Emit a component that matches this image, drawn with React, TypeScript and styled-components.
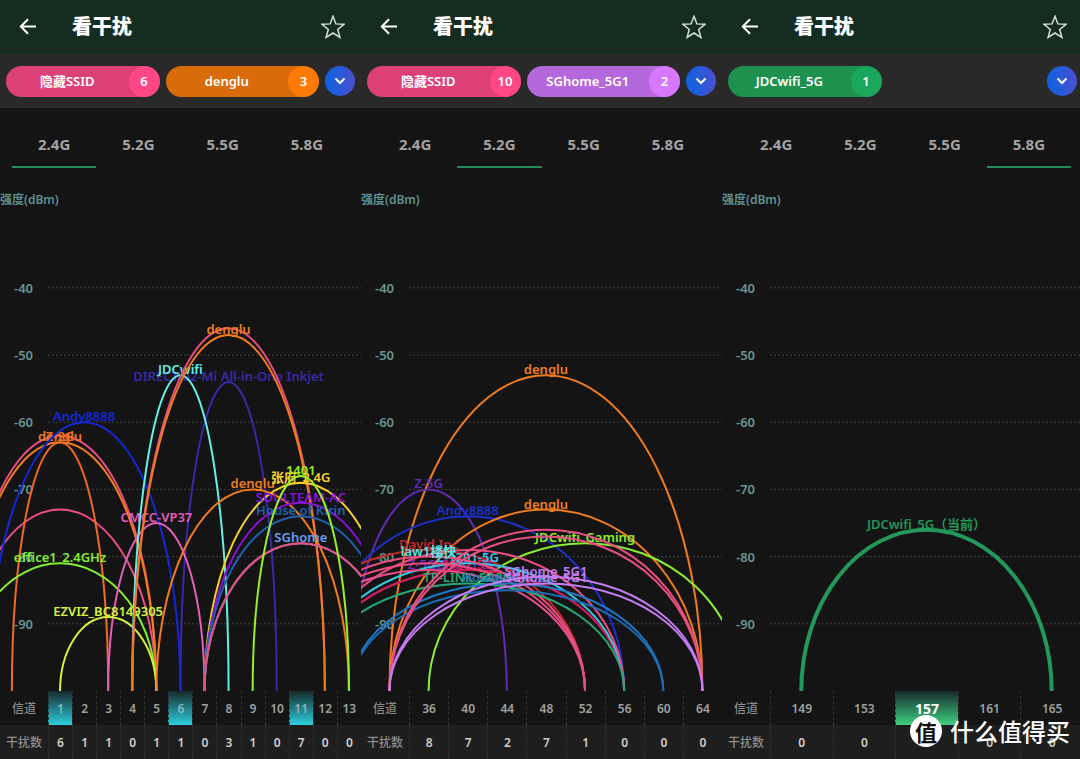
import React from 'react';
import styled, { createGlobalStyle } from 'styled-components';

const GlobalStyle = createGlobalStyle`
  * { box-sizing: border-box; }
  body {
    margin: 0;
    background: #141414;
    color: #fff;
    font-family: "Noto Sans", "Noto Sans CJK SC", sans-serif;
  }
  button { font: inherit; color: inherit; border: 0; margin: 0; padding: 0; background: none; cursor: pointer; }
`;

type Curve = { at: number; half: number; dbm: number; color: string; name?: string; width?: number };
type Chip = { name: string; count: number; base: string; cap: string };
type Screen = {
  id: string;
  chips: Chip[];
  band: string;
  first: number;
  step: number;
  channels: number[];
  counts: number[];
  marked: number[];
  glow: string;
  current?: number;
  curves: Curve[];
};

const BANDS = ['2.4G', '5.2G', '5.5G', '5.8G'];
const PLOT_WIDTH = 361;
const LABEL_COLUMN = 48;
const BASELINE = 691;
const PLOT_TOP = 209;

const PINK = '#e84f80';
const ORANGE = '#f07c1e';

const screens: Screen[] = [
  {
    id: 'g24',
    chips: [
      { name: '隐藏SSID', count: 6, base: '#dc4077', cap: '#ff4788' },
      { name: 'denglu', count: 3, base: '#d96b0a', cap: '#ff7a05' },
    ],
    band: '2.4G',
    first: 1,
    step: 1,
    channels: [1, 2, 3, 4, 5, 6, 7, 8, 9, 10, 11, 12, 13],
    counts: [6, 1, 1, 0, 1, 1, 0, 3, 1, 0, 7, 0, 0],
    marked: [1, 6, 11],
    glow: '#2ccfde',
    curves: [
      { at: 8, half: 2, dbm: -54, color: '#372aa6', name: 'DIRECT-02-Mi All-in-One Inkjet' },
      { at: 1, half: 4, dbm: -62, color: PINK },
      { at: 1, half: 4, dbm: -73, color: PINK },
      { at: 1, half: 4, dbm: -63, color: ORANGE, name: 'denglu' },
      { at: 1, half: 2, dbm: -63, color: '#ef6a22', name: 'Z-2G' },
      { at: 2, half: 4, dbm: -60, color: '#1527d6', name: 'Andy8888' },
      { at: 1, half: 4, dbm: -81, color: '#86ee30', name: 'office1_2.4GHz' },
      { at: 5, half: 2, dbm: -75, color: '#e35fb9', name: 'CMCC-VP37' },
      { at: 3, half: 2, dbm: -89, color: '#d4f33c', name: 'EZVIZ_BC8149305' },
      { at: 6, half: 2, dbm: -53, color: '#66eee4', name: 'JDCwifi' },
      { at: 8, half: 4, dbm: -46, color: PINK },
      { at: 8, half: 4, dbm: -47, color: ORANGE, name: 'denglu' },
      { at: 9, half: 4, dbm: -70, color: ORANGE, name: 'denglu' },
      { at: 11, half: 4, dbm: -69, color: '#f6d030', name: '张府_2.4G' },
      { at: 11, half: 4, dbm: -72, color: '#8a12d0', name: 'SOULTEAM-AC' },
      { at: 11, half: 4, dbm: -74, color: '#1f62ae', name: 'House of Kirin' },
      { at: 11, half: 4, dbm: -78, color: '#6b9df2', name: 'SGhome' },
      { at: 11, half: 4, dbm: -78, color: PINK },
      { at: 11, half: 2, dbm: -68, color: '#98f028', name: '1401' },
    ],
  },
  {
    id: 'g52',
    chips: [
      { name: '隐藏SSID', count: 10, base: '#dc4077', cap: '#ff4788' },
      { name: 'SGhome_5G1', count: 2, base: '#b567dc', cap: '#d878ff' },
    ],
    band: '5.2G',
    first: 36,
    step: 4,
    channels: [36, 40, 44, 48, 52, 56, 60, 64],
    counts: [8, 7, 2, 7, 1, 0, 0, 0],
    marked: [],
    glow: '#2ccfde',
    curves: [
      { at: 48, half: 16, dbm: -53, color: ORANGE, name: 'denglu' },
      { at: 36, half: 8, dbm: -70, color: '#5f2db2', name: 'Z-5G' },
      { at: 40, half: 16, dbm: -74, color: '#1c2fc8', name: 'Andy8888' },
      { at: 48, half: 16, dbm: -73, color: ORANGE, name: 'denglu' },
      { at: 52, half: 16, dbm: -78, color: '#8cee32', name: 'JDCwifi_Gaming' },
      { at: 36, half: 16, dbm: -79, color: '#c22a2c', name: 'David.Inc' },
      { at: 36, half: 16, dbm: -82, color: '#6a2cb8', name: 'Z-5G_2' },
      { at: 40, half: 16, dbm: -82, color: '#6a2cb8', name: 'Z-1201-5G' },
      { at: 40, half: 16, dbm: -82, color: '#d81c50', name: '1402_5G' },
      { at: 40, half: 16, dbm: -81, color: '#38c8e4', name: 'Z-1201-5G' },
      { at: 36, half: 16, dbm: -80, color: PINK },
      { at: 36, half: 16, dbm: -81, color: PINK },
      { at: 36, half: 16, dbm: -82, color: PINK },
      { at: 40, half: 16, dbm: -79, color: PINK },
      { at: 40, half: 16, dbm: -84, color: '#28a878', name: 'TP-LINK_5A0D' },
      { at: 44, half: 16, dbm: -84, color: '#1f7ac4', name: 'House of Kirin' },
      { at: 44, half: 16, dbm: -85, color: '#1b6cb4' },
      { at: 48, half: 16, dbm: -76, color: PINK },
      { at: 48, half: 16, dbm: -77, color: PINK },
      { at: 48, half: 16, dbm: -83, color: '#c47cf0', name: 'SGhome_5G1' },
      { at: 48, half: 16, dbm: -84, color: '#c47cf0', name: 'SGhome_5G1' },
      { at: 36, half: 0, dbm: -80, color: '#58e4e4', name: 'law1楼快' },
    ],
  },
  {
    id: 'g58',
    chips: [{ name: 'JDCwifi_5G', count: 1, base: '#1f914f', cap: '#1aa75c' }],
    band: '5.8G',
    first: 149,
    step: 4,
    channels: [149, 153, 157, 161, 165],
    counts: [0, 0, 1, 0, 0],
    marked: [157],
    glow: '#3fd081',
    current: 157,
    curves: [{ at: 157, half: 8, dbm: -76, color: '#23985a', name: 'JDCwifi_5G（当前）', width: 4 }],
  },
];

const Page = styled.div`
  overflow: hidden;
  position: relative;
`;

const Screens = styled.main`
  display: grid;
  grid-template-columns: repeat(3, minmax(0, 1fr));
  width: calc(100% + 3px);
`;

const Panel = styled.section`
  display: flex;
  flex-direction: column;
  overflow: hidden;
`;

const Header = styled.header`
  display: flex;
  align-items: center;
  height: 54px;
  padding: 0 16px;
  background: #142d20;
`;

const IconButton = styled.button`
  display: flex;
  align-items: center;
  justify-content: center;
  width: 24px;
  height: 24px;
`;

const Title = styled.h1`
  flex: 1;
  margin: 0 0 0 32px;
  font-size: 20px;
  line-height: 28px;
  font-weight: 900;
`;

const FilterBar = styled.div`
  display: grid;
  grid-template-columns: 1fr 1fr 30px;
  align-items: center;
  gap: 6px;
  height: 54px;
  padding: 0 6px;
  background: #292929;
`;

const ChipButton = styled.button<{ $base: string; $cap: string }>`
  display: flex;
  align-items: center;
  height: 31px;
  border-radius: 16px;
  background: ${(p) => p.$base};
  font-size: 13px;
  line-height: 31px;
  font-weight: 600;
  overflow: hidden;

  span { flex: 1; }
  b {
    width: 31px;
    border-radius: 16px;
    background: ${(p) => p.$cap};
    font-weight: 600;
  }
`;

const MoreButton = styled.button`
  grid-column: 3;
  display: flex;
  align-items: center;
  justify-content: center;
  height: 30px;
  border-radius: 50%;
  background: linear-gradient(90deg, #0b63e0, #4a4fd0);
`;

const Tabs = styled.div`
  display: grid;
  grid-template-columns: repeat(4, 1fr);
  padding: 0 12px;
`;

const Tab = styled.button<{ $active: boolean }>`
  && {
    padding: 25px 0 11px;
    border-bottom: 2px solid ${(p) => (p.$active ? '#2a8a57' : 'transparent')};
    color: #a3a3a3;
    font-size: 15px;
    line-height: 22px;
    font-weight: 700;
  }
`;

const AxisTitle = styled.p`
  margin: 0;
  padding-top: 23px;
  color: #5f9090;
  font-size: 12px;
  line-height: 18px;
  font-weight: 600;
`;

const Plot = styled.svg`
  display: block;
  width: 100%;
  height: auto;
  font-size: 13px;
  font-weight: 600;
`;

const ChannelTable = styled.table`
  width: 100%;
  table-layout: fixed;
  border-collapse: separate;
  border-spacing: 0;
  font-size: 12px;
  text-align: center;
`;

const LabelColumn = styled.col`
  width: 48px;
`;

const Row = styled.tr<{ $raised?: boolean }>`
  height: 34px;
  background: ${(p) => (p.$raised ? '#1e1e1e' : '#141414')};
`;

const RowLabel = styled.th`
  padding: 0;
  color: #8c8c8c;
  font-weight: 500;
  white-space: nowrap;
`;

const ChannelCell = styled.th<{ $glow?: string; $current: boolean }>`
  padding: 0;
  border-left: 1px dashed #303030;
  background: ${(p) => (p.$glow ? `linear-gradient(#16282a, ${p.$glow})` : 'none')};
  color: ${(p) => (p.$current ? '#fff' : p.$glow ? '#8ab8ba' : '#a0a0a0')};
  font-size: ${(p) => (p.$current ? 14 : 12)}px;
  font-weight: ${(p) => (p.$current ? 700 : 600)};
`;

const CountCell = styled.td`
  padding: 0;
  border-left: 1px dashed #303030;
  color: #d4cdc8;
  font-weight: 600;
`;

const Watermark = styled.div`
  position: absolute;
  right: 10px;
  bottom: 12px;
  display: flex;
  align-items: center;
  gap: 8px;
  font-family: "Noto Sans CJK SC", sans-serif;
  font-size: 24px;
  line-height: 32px;
  font-weight: 500;
`;

const Seal = styled.span`
  width: 32px;
  border-radius: 50%;
  background: #fff;
  color: #111;
  font-size: 22px;
  font-weight: 700;
  text-align: center;
`;

function BackIcon() {
  return (
    <svg width="18" height="18" viewBox="0 0 18 18" fill="none" stroke="#fff" strokeWidth="2" aria-hidden="true">
      <path d="M17 8.5H2M9 1.3 1.8 8.5 9 15.7" />
    </svg>
  );
}

function StarIcon() {
  return (
    <svg width="24" height="24" viewBox="0 0 24 24" fill="none" stroke="#d5e0d9" strokeWidth="1.5" aria-hidden="true">
      <path d="M12 1.3 14.9 8.9 23 9.3 16.7 14.4 18.9 22.4 12 18 5.1 22.4 7.3 14.4 1 9.3 9.1 8.9Z" />
    </svg>
  );
}

function ChevronIcon() {
  return (
    <svg width="12" height="8" viewBox="0 0 12 8" fill="none" stroke="#fff" strokeWidth="2" aria-hidden="true">
      <path d="M1.5 1.5 6 6 10.5 1.5" />
    </svg>
  );
}

const levelY = (dbm: number) => BASELINE - (dbm + 100) * 6.72;

function InterferencePlot({ screen }: { screen: Screen }) {
  const column = (PLOT_WIDTH - LABEL_COLUMN) / screen.channels.length;
  const unit = column / screen.step;
  const channelX = (channel: number) => LABEL_COLUMN + column / 2 + (channel - screen.first) * unit;

  return (
    <Plot viewBox={`0 ${PLOT_TOP} ${PLOT_WIDTH} ${BASELINE - PLOT_TOP}`} role="img" aria-label={`${screen.band} 干扰图`}>
      {[-40, -50, -60, -70, -80, -90].map((level) => (
        <g key={level}>
          <line x1={LABEL_COLUMN} x2={PLOT_WIDTH} y1={levelY(level)} y2={levelY(level)} stroke="#414141" strokeDasharray="2 2" />
          <text x="14" y={levelY(level) + 5} fill="#6a9494">{level}</text>
        </g>
      ))}
      {screen.curves.map((c, i) => {
        const x = channelX(c.at);
        const rx = c.half * unit;
        const y = levelY(c.dbm);
        return (
          <g key={i}>
            {rx > 0 && (
              <path
                d={`M${x - rx} ${BASELINE}A${rx} ${BASELINE - y} 0 0 1 ${x + rx} ${BASELINE}`}
                fill="none"
                stroke={c.color}
                strokeWidth={c.width ?? 2}
              />
            )}
            {c.name && <text x={x} y={y - 1} fill={c.color} textAnchor="middle">{c.name}</text>}
          </g>
        );
      })}
    </Plot>
  );
}

function ScreenPanel({ screen }: { screen: Screen }) {
  return (
    <Panel>
      <Header>
        <IconButton aria-label="返回"><BackIcon /></IconButton>
        <Title>看干扰</Title>
        <IconButton aria-label="收藏"><StarIcon /></IconButton>
      </Header>
      <FilterBar>
        {screen.chips.map((chip) => (
          <ChipButton key={chip.name} $base={chip.base} $cap={chip.cap}>
            <span>{chip.name}</span>
            <b>{chip.count}</b>
          </ChipButton>
        ))}
        <MoreButton aria-label="展开"><ChevronIcon /></MoreButton>
      </FilterBar>
      <Tabs role="tablist">
        {BANDS.map((band) => (
          <Tab key={band} role="tab" aria-selected={band === screen.band} $active={band === screen.band}>{band}</Tab>
        ))}
      </Tabs>
      <AxisTitle>强度(dBm)</AxisTitle>
      <InterferencePlot screen={screen} />
      <ChannelTable>
        <colgroup>
          <LabelColumn />
          {screen.channels.map((channel) => <col key={channel} />)}
        </colgroup>
        <tbody>
          <Row>
            <RowLabel scope="row">信道</RowLabel>
            {screen.channels.map((channel) => (
              <ChannelCell
                key={channel}
                scope="col"
                $glow={screen.marked.includes(channel) ? screen.glow : undefined}
                $current={channel === screen.current}
              >
                {channel}
              </ChannelCell>
            ))}
          </Row>
          <Row $raised>
            <RowLabel scope="row">干扰数</RowLabel>
            {screen.counts.map((count, i) => <CountCell key={screen.channels[i]}>{count}</CountCell>)}
          </Row>
        </tbody>
      </ChannelTable>
    </Panel>
  );
}

export default function App() {
  return (
    <Page>
      <GlobalStyle />
      <Screens>
        {screens.map((screen) => <ScreenPanel key={screen.id} screen={screen} />)}
      </Screens>
      <Watermark>
        <Seal>值</Seal>
        <span>什么值得买</span>
      </Watermark>
    </Page>
  );
}
